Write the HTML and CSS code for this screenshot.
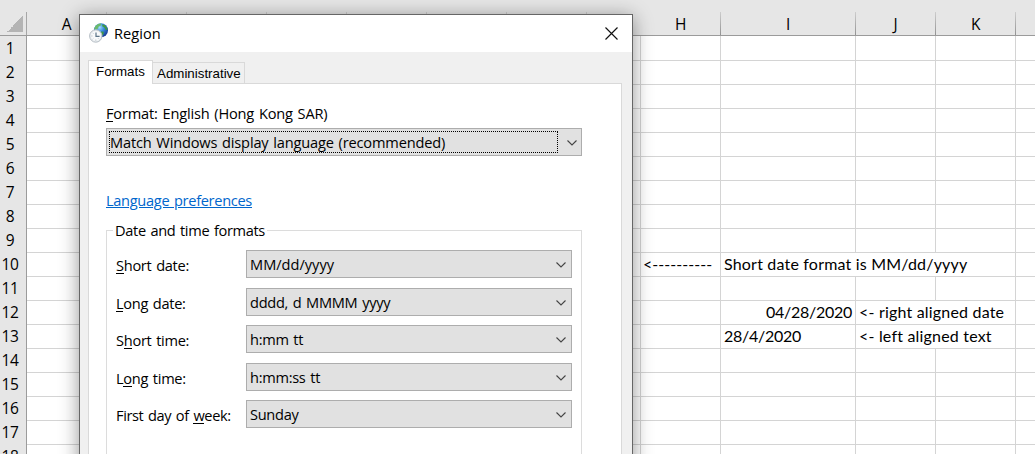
FILE: index.html
```
<!DOCTYPE html>
<html lang="en">
<head>
<meta charset="utf-8">
<title>Region</title>
<link rel="stylesheet" href="styles.css">
</head>
<body>
<div class="sheet">
  <div class="row head"><span class="corner"></span><span class="ab"><b>A</b><b></b><b></b><b></b><b></b><b></b><b></b><b></b></span><b>H</b><b>I</b><b>J</b><b>K</b><b></b></div>
  <div class="row"><i>1</i><u></u><u></u><u></u><u></u><u></u><u></u></div>
  <div class="row"><i>2</i><u></u><u></u><u></u><u></u><u></u><u></u></div>
  <div class="row"><i>3</i><u></u><u></u><u></u><u></u><u></u><u></u></div>
  <div class="row"><i>4</i><u></u><u></u><u></u><u></u><u></u><u></u></div>
  <div class="row"><i>5</i><u></u><u></u><u></u><u></u><u></u><u></u></div>
  <div class="row"><i>6</i><u></u><u></u><u></u><u></u><u></u><u></u></div>
  <div class="row"><i>7</i><u></u><u></u><u></u><u></u><u></u><u></u></div>
  <div class="row"><i>8</i><u></u><u></u><u></u><u></u><u></u><u></u></div>
  <div class="row"><i>9</i><u></u><u></u><u></u><u></u><u></u><u></u></div>
  <div class="row"><i>10</i><u></u><u class="arrow">&lt;----------</u><u class="span3">Short date format is MM/dd/yyyy</u><u></u></div>
  <div class="row"><i>11</i><u></u><u></u><u></u><u></u><u></u><u></u></div>
  <div class="row"><i>12</i><u></u><u></u><u class="num right">04/28/2020</u><u class="span2">&lt;- right aligned date</u><u></u></div>
  <div class="row"><i>13</i><u></u><u></u><u class="num">28/4/2020</u><u class="span2">&lt;- left aligned text</u><u></u></div>
  <div class="row"><i>14</i><u></u><u></u><u></u><u></u><u></u><u></u></div>
  <div class="row"><i>15</i><u></u><u></u><u></u><u></u><u></u><u></u></div>
  <div class="row"><i>16</i><u></u><u></u><u></u><u></u><u></u><u></u></div>
  <div class="row"><i>17</i><u></u><u></u><u></u><u></u><u></u><u></u></div>
  <div class="row"><i>18</i><u></u><u></u><u></u><u></u><u></u><u></u></div>
</div>

<div class="dialog">
  <div class="titlebar">
    <svg class="app-icon" width="20" height="20" viewBox="0 0 20 20">
      <defs>
        <radialGradient id="sea" cx=".4" cy=".3" r=".75"><stop offset="0" stop-color="#a5dcfa"/><stop offset=".4" stop-color="#3c90e0"/><stop offset="1" stop-color="#14308c"/></radialGradient>
      </defs>
      <circle cx="12" cy="7.2" r="7" fill="url(#sea)"/>
      <path d="M5.6 4.6C7 1.6 10 .3 12.4.6L11.6 2.8 9.6 3.6 9 5.6 7 6.8 5.4 6.4Z" fill="#6cba6a"/>
      <path d="M13.4 1.2l3 1.4 1.8 2.6.2 2-1.8-.8-1.4-2.2-2-1ZM12 8.4l2.8.4-.4 2.6-1.8 1.6Z" fill="#3f9a44"/>
      <circle cx="6.8" cy="13" r="6.2" fill="#e9edf0" stroke="#b5bdc4" stroke-width="1"/>
      <circle cx="6.8" cy="13" r="4.8" fill="#f8fafb"/>
      <path d="M7 9.4v4h3.6" fill="none" stroke="#5c7488" stroke-width="1.2"/>
      <path d="M6.8 16.6v1M2.4 13h1M3.7 9.9l.6.6M3.7 16.1l.6-.6M9.9 16.1l-.6-.6" stroke="#98a4ae" stroke-width=".8"/>
    </svg>
    <span class="title">Region</span>
    <svg class="close" width="13" height="13" viewBox="0 0 13 13"><path d="M.5.5l12 12M12.5.5l-12 12" stroke="#111" stroke-width="1.15"/></svg>
  </div>
  <div class="tabs"><div class="tab active">Formats</div><div class="tab">Administrative</div></div>
  <div class="panel">
    <div class="format"><em>F</em>ormat: English (Hong Kong SAR)</div>
    <div class="select main"><span class="focus">Match Windows display language (recommended)</span><svg width="10" height="6" viewBox="0 0 10 6"><path d="M.5.5L5 5 9.5.5"/></svg></div>
    <div><a class="link">Language preferences</a></div>
    <div class="group">
      <span class="legend">Date and time formats</span>
      <div class="field"><label><em>S</em>hort date:</label><div class="select pattern">MM/dd/yyyy<svg width="10" height="6" viewBox="0 0 10 6"><path d="M.5.5L5 5 9.5.5"/></svg></div></div>
      <div class="field"><label><em>L</em>ong date:</label><div class="select">dddd, d MMMM yyyy<svg width="10" height="6" viewBox="0 0 10 6"><path d="M.5.5L5 5 9.5.5"/></svg></div></div>
      <div class="field"><label>S<em>h</em>ort time:</label><div class="select">h:mm tt<svg width="10" height="6" viewBox="0 0 10 6"><path d="M.5.5L5 5 9.5.5"/></svg></div></div>
      <div class="field"><label>L<em>o</em>ng time:</label><div class="select">h:mm:ss tt<svg width="10" height="6" viewBox="0 0 10 6"><path d="M.5.5L5 5 9.5.5"/></svg></div></div>
      <div class="field"><label class="week">First day of <em>w</em>eek:</label><div class="select">Sunday<svg width="10" height="6" viewBox="0 0 10 6"><path d="M.5.5L5 5 9.5.5"/></svg></div></div>
    </div>
  </div>
</div>
</body>
</html>
```
FILE: styles.css
```
* { box-sizing: border-box; }
html { height: 454px; overflow: hidden; }
body {
  margin: 0;
  width: 1035px;
  height: 454px;
  overflow: hidden;
  position: relative;
  background: #fff;
  color: #000;
  font: 14.6px/20px "Open Sans", sans-serif;
  letter-spacing: -0.29px;
  word-spacing: 1.2px;
  white-space: nowrap;
}
b, i, u, em { font-weight: normal; font-style: normal; text-decoration: none; }

/* Spreadsheet */
.sheet { height: 454px; overflow: hidden; }
.row {
  display: grid;
  grid-template-columns: 27px 614px 80px 135px 80px 80px 1fr;
  height: 24px;
}
.row i {
  background: #e6e6e6;
  border-right: 1px solid #9b9b9b;
  border-bottom: 1px solid #ababab;
  padding-right: 6px;
  text-align: center;
  font-size: 15.5px;
  line-height: 24px;
}
.row u {
  border-right: 1px solid #d4d4d4;
  border-bottom: 1px solid #d4d4d4;
  padding: 0 3px;
  font: 16px/23px Lato, sans-serif;
  letter-spacing: 0.19px;
  word-spacing: 0;
}
.row u:last-child { border-right: 0; }
.row .arrow { padding-left: 2px; letter-spacing: 0.05px; }
.row .span2 { grid-column: span 2; }
.row .span3 { grid-column: span 3; }
.row .num { letter-spacing: -0.27px; }
.row .right { text-align: right; }
.head {
  height: 36px;
  background: #e6e6e6;
  border-bottom: 1px solid #9b9b9b;
}
.head b {
  height: 23px;
  margin-top: 12px;
  text-align: center;
  font-size: 15.5px;
  line-height: 25px;
  border-right: 1px solid;
  border-image: linear-gradient(#d0d0d0, #8f8f8f) 1;
}
.head b:last-child { border: 0; }
.ab { display: grid; grid-template-columns: repeat(7, 80px) 54px; }
.corner {
  margin-top: 12px;
  height: 23px;
  border-right: 1px solid #a6a6a6;
  background: linear-gradient(135deg, transparent 50%, #b4b4b4 50%) 7px 4px / 16px 16px no-repeat;
}

/* Dialog window */
.dialog {
  position: absolute;
  left: 79px;
  top: 14px;
  width: 554px;
  height: 480px;
  background: #f0f0f0;
  border: 1px solid #666;
  box-shadow: 0 3px 18px rgba(0, 0, 0, 0.42);
}
.titlebar {
  display: flex;
  align-items: flex-start;
  height: 37px;
  padding: 8px 14px 0 9px;
  background: #fff;
}
.title { margin: 0 auto 0 5px; letter-spacing: 0.05px; }
.close { margin-top: 4px; }
.tabs {
  display: flex;
  align-items: flex-end;
  height: 23px;
  margin: 8px 0 0 8px;
  font: 13.33px/18px "Liberation Sans", sans-serif;
  letter-spacing: 0;
}
.tab {
  width: 92px;
  height: 21px;
  border: 1px solid #d9d9d9;
  border-width: 1px 1px 0 0;
  padding: 2px 0 0 4px;
}
.tab.active {
  position: relative;
  z-index: 1;
  width: 65px;
  height: 24px;
  margin-bottom: -1px;
  padding: 2px 0 0 7px;
  border-width: 1px 1px 0 1px;
  background: #fff;
}
.panel {
  width: 534px;
  height: 420px;
  margin-left: 8px;
  padding: 19px 0 0 17px;
  background: #fff;
  border: 1px solid #d9d9d9;
}
em { border-bottom: 1px solid #000; display: inline-block; line-height: 16px; }
.format { letter-spacing: -0.18px; }
.select {
  display: flex;
  align-items: center;
  justify-content: space-between;
  width: 326px;
  height: 28px;
  padding: 0 5px 0 3px;
  background: #e1e1e1;
  border: 1px solid #adadad;
}
.select svg { fill: none; stroke: #444; stroke-width: 1.1; position: relative; top: 1px; }
.select.main { width: 476px; margin: 5px 0 34px; padding: 0 4px 0 2px; }
.pattern { letter-spacing: 0; }
.focus {
  width: 449px;
  height: 22px;
  border: 1px dotted #000;
  letter-spacing: -0.17px;
}
.link {
  color: #0066cc;
  text-decoration: underline;
  letter-spacing: -0.31px;
}
.group {
  position: relative;
  display: flex;
  flex-direction: column;
  gap: 9.5px;
  width: 476px;
  height: 300px;
  margin-top: 20px;
  padding: 19px 0 0 9px;
  border: 1px solid #dcdcdc;
}
.legend {
  position: absolute;
  left: 6px;
  top: -11px;
  padding: 0 2px;
  background: #fff;
  letter-spacing: -0.34px;
}
.field { display: flex; height: 28px; }
.field label { width: 130px; padding-top: 5px; }
.field .week { letter-spacing: -0.38px; }
```
